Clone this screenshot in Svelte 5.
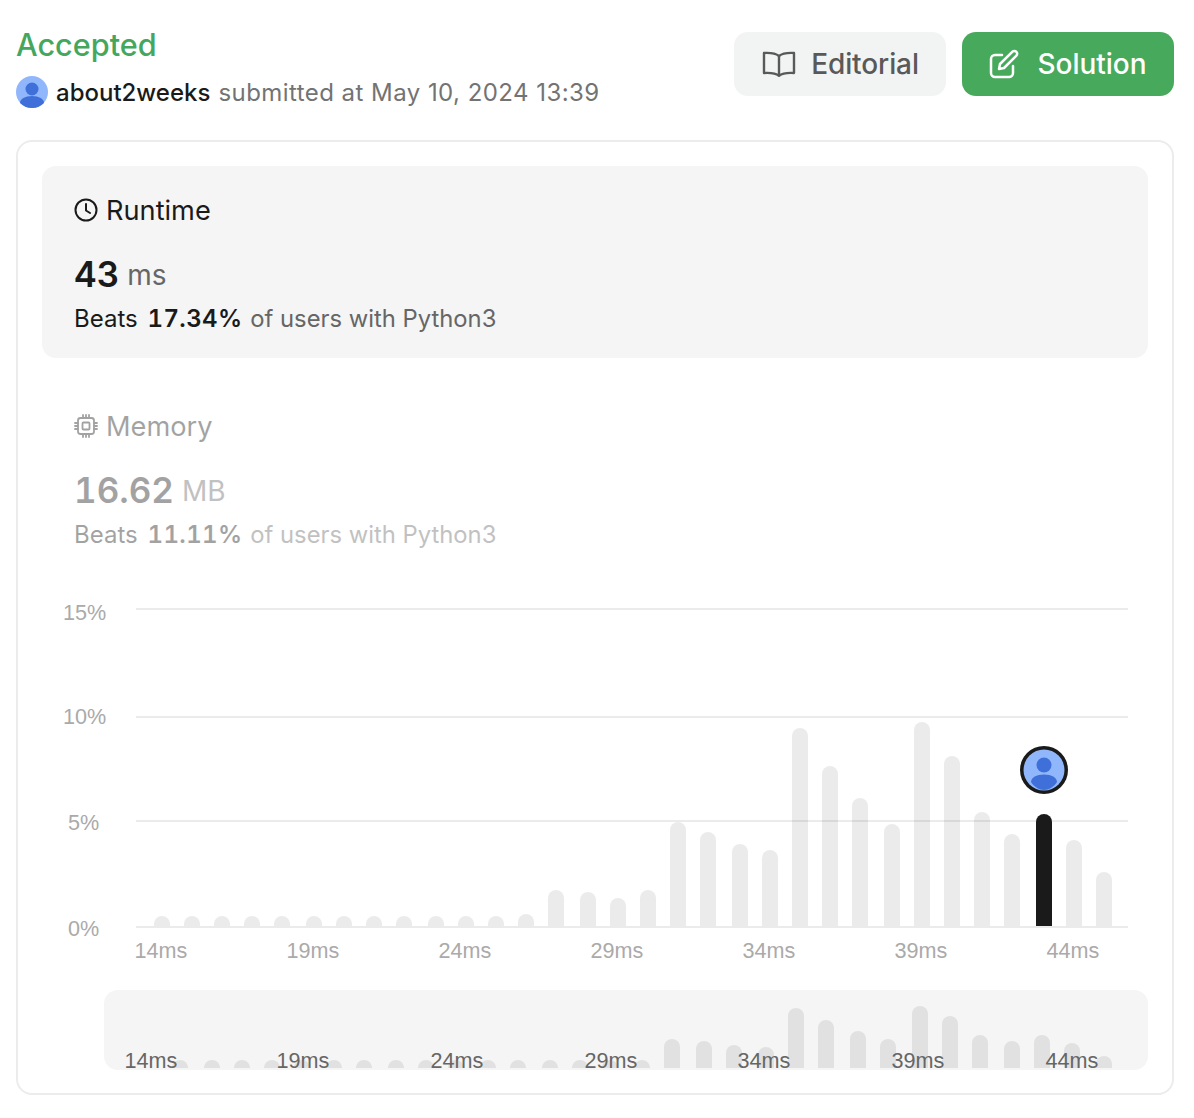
<script>
  const base = 926;
  // left edge and top of each bar, read off the main chart
  const bars = [
    [154, 916], [184, 916], [214, 916], [244, 916], [274, 916], [306, 916], [336, 916], [366, 916],
    [396, 916], [428, 916], [458, 916], [488, 916], [518, 914], [548, 890], [580, 892], [610, 898],
    [640, 890], [670, 822], [700, 832], [732, 844], [762, 850], [792, 728], [822, 766], [852, 798],
    [884, 824], [914, 722], [944, 756], [974, 812], [1004, 834], [1036, 814], [1066, 840], [1096, 872]
  ];
  const mini = [
    [172, 1060], [204, 1060], [234, 1060], [264, 1060], [294, 1060], [326, 1060], [356, 1060], [388, 1060],
    [418, 1060], [448, 1060], [480, 1060], [510, 1060], [542, 1060], [572, 1060], [602, 1060], [634, 1060],
    [664, 1039], [696, 1041], [726, 1045], [758, 1047], [788, 1008], [818, 1020], [850, 1031], [880, 1039],
    [912, 1006], [942, 1016], [972, 1035], [1004, 1041], [1034, 1035], [1064, 1043], [1096, 1056]
  ];
  const grid = [
    { y: 609, label: '15%', base: 620, x: 63 },
    { y: 717, label: '10%', base: 724, x: 63 },
    { y: 821, label: '5%', base: 830, x: 68 },
    { y: 927, label: '0%', base: 936, x: 68 }
  ];
  const ticks = [
    { label: '14ms', main: 161, small: 151 },
    { label: '19ms', main: 313, small: 303 },
    { label: '24ms', main: 465, small: 457 },
    { label: '29ms', main: 617, small: 611 },
    { label: '34ms', main: 769, small: 764 },
    { label: '39ms', main: 921, small: 918 },
    { label: '44ms', main: 1073, small: 1072 }
  ];

  function barPath(x, top, bottom, w) {
    const r = w / 2;
    return `M${x} ${bottom}V${top + r}a${r} ${r} 0 0 1 ${w} 0V${bottom}Z`;
  }
</script>

<div class="page">
  <header class="head">
    <div>
      <h1 class="status">Accepted</h1>
      <div class="who">
        <svg class="avatar" viewBox="0 0 32 32" aria-hidden="true">
          <circle cx="16" cy="16" r="16" fill="#90b7fb" />
          <circle cx="16" cy="13" r="6.500" fill="#3f6fd9" />
          <path d="M4 27c0-4 5-7 12-7s12 3 12 7c-3 3-7 5-12 5s-9-2-12-5Z" fill="#3f6fd9" />
        </svg>
        <span class="name">about2weeks</span>
        <span class="when">submitted at May 10, 2024 13:39</span>
      </div>
    </div>
    <div class="actions">
      <button class="btn editorial">
        <svg viewBox="0 0 36 28" width="36" height="28" fill="none" stroke="currentColor" stroke-width="2.400" stroke-linejoin="round" stroke-linecap="round">
          <path d="M18 6c-3-2.400-8-3.400-15-3v20c7-.4 12 .4 15 2.800 3-2.400 8-3.200 15-2.800V3c-7-.4-12 .6-15 3Z" />
          <path d="M18 6v19" />
        </svg>
        Editorial
      </button>
      <button class="btn solution">
        <svg viewBox="0 0 30 30" width="30" height="30" fill="none" stroke="currentColor" stroke-width="2.500" stroke-linejoin="round" stroke-linecap="round">
          <path d="M13 6H6a4 4 0 0 0-4 4v14a4 4 0 0 0 4 4h14a4 4 0 0 0 4-4v-7" />
          <path d="M11 15 23.500 2.700a2.600 2.600 0 0 1 3.700 0l.2.200a2.600 2.600 0 0 1 0 3.700L15 19l-5 1Z" />
        </svg>
        Solution
      </button>
    </div>
  </header>

  <section class="card">
    <div class="stat active">
      <div class="title">
        <svg viewBox="0 0 24 24" width="24" height="24" fill="none" stroke="currentColor" stroke-width="2" stroke-linecap="round" stroke-linejoin="round">
          <circle cx="12" cy="12" r="10.500" />
          <path d="M12 6v6.500l4 2.500" />
        </svg>
        Runtime
      </div>
      <div class="value"><b>43</b><span>ms</span></div>
      <div class="beats">Beats <b>17.34%</b> <span>of users with Python3</span></div>
    </div>

    <div class="stat faded">
      <div class="title">
        <svg viewBox="0 0 24 24" width="24" height="24" fill="none" stroke="currentColor" stroke-width="1.800" stroke-linecap="round" stroke-linejoin="round">
          <rect x="4" y="4" width="16" height="16" rx="2.500" />
          <rect x="8.500" y="8.500" width="7" height="7" rx="1" />
          <path d="M9 1v3M12 1v3M15 1v3M9 20v3M12 20v3M15 20v3M1 9h3M1 12h3M1 15h3M20 9h3M20 12h3M20 15h3" />
        </svg>
        Memory
      </div>
      <div class="value"><b>16.62</b><span>MB</span></div>
      <div class="beats">Beats <b>11.11%</b> <span>of users with Python3</span></div>
    </div>

    <svg class="chart" viewBox="42 590 1106 380" width="1106" height="380">
      {#each grid as g}
        <line class="gridline" x1="136" x2="1128" y1={g.y} y2={g.y} />
        <text class="axis" x={g.x} y={g.base}>{g.label}</text>
      {/each}
      {#each bars as [x, top], i}
        <path class={i === 29 ? 'bar mine' : 'bar'} d={barPath(x, top, base, 16)} />
      {/each}
      {#each ticks as t}
        <text class="axis" x={t.main} y="958" text-anchor="middle">{t.label}</text>
      {/each}
      <circle cx="1044" cy="770" r="24" fill="#1a1a1a" />
      <circle cx="1044" cy="770" r="20.500" fill="#90b7fb" />
      <circle cx="1044" cy="765" r="7.500" fill="#3f6fd9" />
      <path d="M1031 782c0-4.500 5.500-7.500 13-7.500s13 3 13 7.500c-3 4.500-8 8-13 8s-10-3.500-13-8Z" fill="#3f6fd9" />
    </svg>

    <div class="brush">
      <svg viewBox="104 990 1044 80" width="1044" height="80">
        {#each mini as [x, top]}
          <path class="minibar" d={barPath(x, top, 1068, 16)} />
        {/each}
        {#each ticks as t}
          <text class="minilabel" x={t.small} y="1068" text-anchor="middle">{t.label}</text>
        {/each}
      </svg>
    </div>
  </section>
</div>

<style>
  :global(body) {
    background: #fff;
  }
  .page {
    box-sizing: border-box;
    width: 1194px;
    padding: 24px 20px 22px 16px;
    font-family: Inter, "Liberation Sans", sans-serif;
    color: #1a1a1a;
  }
  .head {
    display: flex;
    justify-content: space-between;
    align-items: flex-start;
    height: 116px;
  }
  .status {
    margin: 0;
    font-size: 30.600px;
    line-height: 42px;
    font-weight: 500;
    color: #45a75e;
  }
  .who {
    display: flex;
    align-items: center;
    height: 32px;
    margin-top: 10px;
    font-size: 24px;
  }
  .avatar {
    width: 32px;
    height: 32px;
    margin-right: 8px;
  }
  .name {
    font-weight: 500;
    margin-right: 8px;
  }
  .when {
    color: #737373;
    letter-spacing: 0.45px;
  }
  .actions {
    display: flex;
    gap: 16px;
    margin-top: 8px;
  }
  .btn {
    display: flex;
    align-items: center;
    justify-content: center;
    gap: 14px;
    width: 212px;
    height: 64px;
    border: none;
    border-radius: 14px;
    font-family: inherit;
    font-size: 28px;
    font-weight: 500;
  }
  .editorial {
    background: #f2f3f3;
    color: #595959;
    letter-spacing: -0.1px;
  }
  .solution {
    gap: 18px;
    background: #47a95c;
    color: #fff;
  }
  .card {
    box-sizing: border-box;
    height: 955px;
    padding: 24px;
    border: 2px solid #ececec;
    border-radius: 16px;
  }
  .stat {
    box-sizing: border-box;
    height: 192px;
    padding: 26px 32px 0;
    border-radius: 14px;
    margin-bottom: 24px;
  }
  .active {
    background: #f5f5f5;
  }
  .faded {
    opacity: 0.4;
    margin-bottom: 0;
    height: 208px;
  }
  .title {
    display: flex;
    align-items: center;
    gap: 8px;
    height: 36px;
    font-size: 27.200px;
  }
  .value {
    height: 44px;
    margin-top: 24px;
    font-size: 35px;
    line-height: 44px;
    font-variant-numeric: tabular-nums;
  }
  .value b {
    font-weight: 600;
  }
  .value span {
    margin-left: 8px;
    font-size: 28px;
    color: #666;
    vertical-align: 2px;
  }
  .beats {
    margin-top: 6px;
    font-size: 24px;
    line-height: 34px;
  }
  .beats b {
    font-weight: 600;
    margin: 0 1px 0 3px;
    letter-spacing: 0.4px;
    font-variant-numeric: tabular-nums;
  }
  .beats span {
    color: #666;
    font-size: 23.800px;
  }
  .chart {
    display: block;
  }
  .gridline {
    stroke: #ebebeb;
    stroke-width: 2;
  }
  .axis {
    font-family: "Liberation Sans", sans-serif;
    font-size: 21.600px;
    fill: #aaa;
  }
  .bar {
    fill: rgba(0, 0, 0, 0.08);
  }
  .mine {
    fill: #1a1a1a;
  }
  .brush {
    height: 80px;
    width: 1044px;
    margin: 20px 0 0 62px;
    border-radius: 14px;
    background: #f5f5f5;
  }
  .brush svg {
    display: block;
    overflow: visible;
  }
  .minibar {
    fill: #e1e1e1;
  }
  .minilabel {
    font-family: "Liberation Sans", sans-serif;
    font-size: 21.600px;
    fill: #666;
  }
</style>
